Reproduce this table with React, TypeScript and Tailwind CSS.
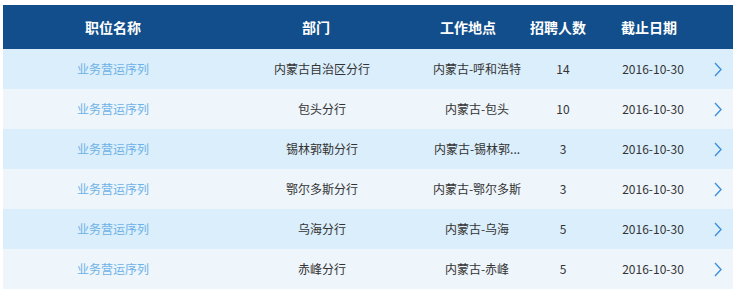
import React from 'react';

type Job = {
    title: string;
    dept: string;
    place: string;
    count: number;
    deadline: string;
};

// place is already shortened the way the list shows it
const jobs: Job[] = [
    { title: '业务营运序列', dept: '内蒙古自治区分行', place: '内蒙古-呼和浩特', count: 14, deadline: '2016-10-30' },
    { title: '业务营运序列', dept: '包头分行', place: '内蒙古-包头', count: 10, deadline: '2016-10-30' },
    { title: '业务营运序列', dept: '锡林郭勒分行', place: '内蒙古-锡林郭...', count: 3, deadline: '2016-10-30' },
    { title: '业务营运序列', dept: '鄂尔多斯分行', place: '内蒙古-鄂尔多斯', count: 3, deadline: '2016-10-30' },
    { title: '业务营运序列', dept: '乌海分行', place: '内蒙古-乌海', count: 5, deadline: '2016-10-30' },
    { title: '业务营运序列', dept: '赤峰分行', place: '内蒙古-赤峰', count: 5, deadline: '2016-10-30' },
];

function Chevron() {
    return (
        <svg width="8" height="15" viewBox="0 0 8 15" fill="none">
            <polyline points="1,1 7,7.5 1,14" stroke="#3d8fe0" strokeWidth="1.4" />
        </svg>
    );
}

export default function App() {
    return (
        <div
            className="w-[740px] h-[299px] bg-white pt-[5px] pl-[3px]"
            style={{ fontFamily: '"Microsoft YaHei", "Noto Sans CJK SC", sans-serif' }}
        >
            <div className="w-[730px]">
                {/* header */}
                <div className="flex h-[44px] items-center bg-[#114e8b] text-[14px] font-bold text-white">
                    <div className="w-[220px] text-center">职位名称</div>
                    <div className="w-[204px] pr-[18px] text-center">部门</div>
                    <div className="w-[82px] text-center">工作地点</div>
                    <div className="w-[98px] text-center">招聘人数</div>
                    <div className="w-[84px] text-center">截止日期</div>
                    <div className="flex-1"></div>
                </div>

                {/* rows */}
                {jobs.map((job, i) => (
                    <div
                        key={i}
                        className={
                            'flex h-[40px] items-center text-[12px] text-[#333333] ' +
                            (i % 2 === 0 ? 'bg-[#dbeefb]' : 'bg-[#eef5fb]')
                        }
                    >
                        <div className="w-[220px] text-center text-[#6cb2e8]">{job.title}</div>
                        <div className="w-[204px] pr-[6px] text-center">{job.dept}</div>
                        <div className="w-[100px] whitespace-nowrap text-center">{job.place}</div>
                        <div className="w-[72px] text-center">{job.count}</div>
                        <div className="w-[108px] text-center">{job.deadline}</div>
                        <div className="flex flex-1 items-center pl-[7px]">
                            <Chevron />
                        </div>
                    </div>
                ))}
            </div>
        </div>
    );
}
